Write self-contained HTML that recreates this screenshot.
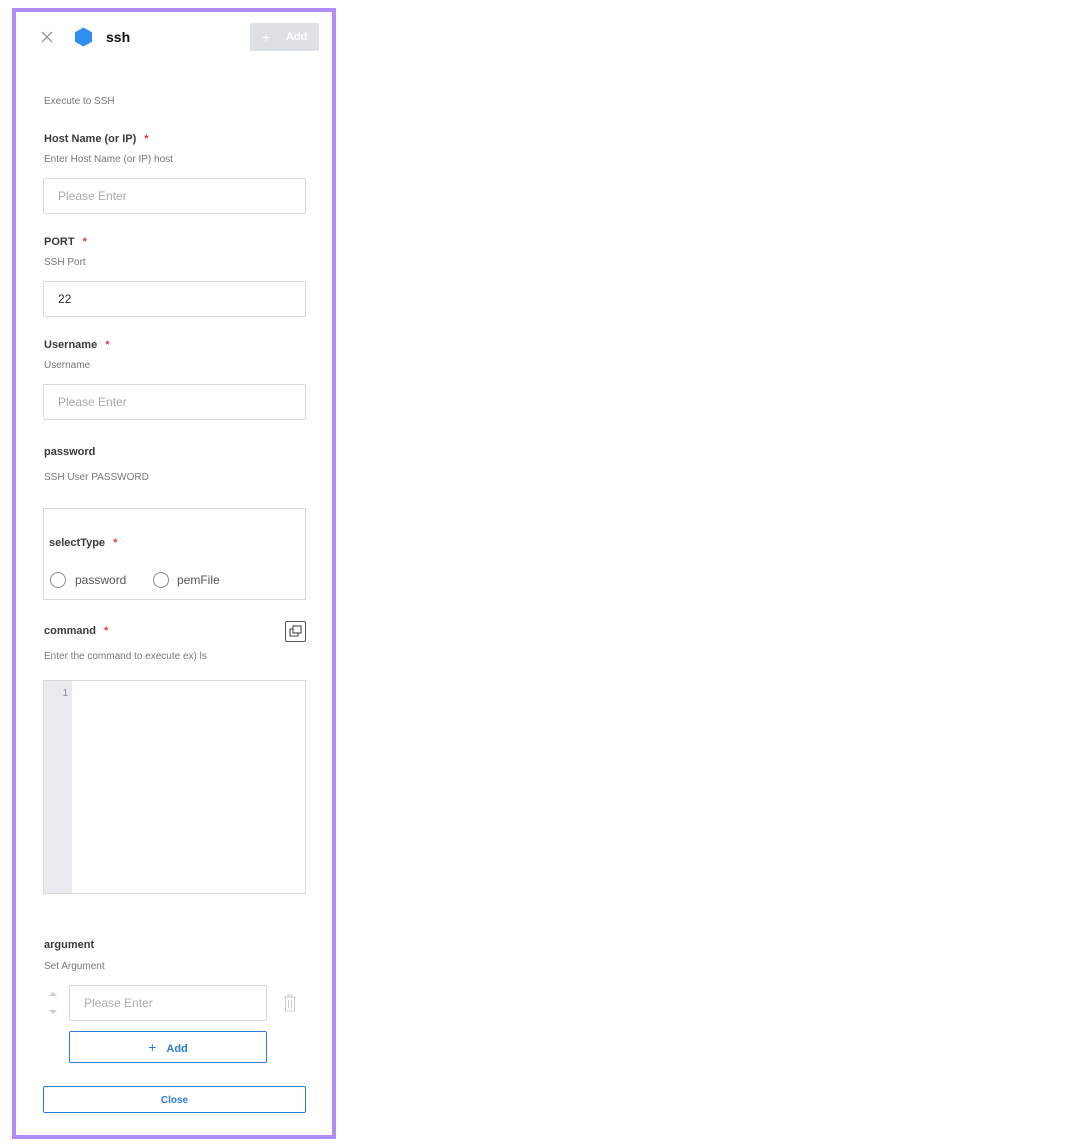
<!DOCTYPE html>
<html><head><meta charset="utf-8"><style>
*{box-sizing:border-box;margin:0;padding:0}
body{width:1078px;height:1146px;background:#fff;font-family:"Liberation Sans",Arial,sans-serif;position:relative;overflow:hidden}
.frame{position:absolute;left:12px;top:8px;width:324px;height:1131px;border:4px solid #b08cf7}
.a{position:absolute}
.lbl{font-size:11px;font-weight:bold;color:#3a3a3a}
.lbl .r{color:#e53935;margin-left:8px}
.d{font-size:10px;color:#777}
.inp{position:absolute;border:1px solid #d9d9d9;border-radius:2px;height:36px;font-size:12px;color:#aaa;padding-left:14px;line-height:34px}
</style></head><body>
<div class="frame"></div>
<svg class="a" style="left:41px;top:31px" width="12" height="12" viewBox="0 0 12 12"><path d="M1 1L11 11M11 1L1 11" stroke="#999" stroke-width="1.3"/></svg>
<svg class="a" style="left:74px;top:27px" width="19" height="20" viewBox="0 0 19 20"><path d="M9.5 0.5L18 5.2V14.8L9.5 19.5L1 14.8V5.2Z" fill="#2f8ff0"/></svg>
<div class="a" style="left:106px;top:29px;font-size:14px;font-weight:bold;color:#111">ssh</div>
<div class="a" style="left:250px;top:23px;width:69px;height:28px;background:#dde0e4;border-radius:2px;color:#fff;font-size:11px;font-weight:bold;line-height:28px"><span style="position:absolute;left:12px;font-weight:normal;font-size:14px">+</span><span style="position:absolute;left:36px">Add</span></div>
<div class="a d" style="left:44px;top:96px">Execute to SSH</div>
<div class="a lbl" style="left:44px;top:133px">Host Name (or IP)<span class="r">*</span></div>
<div class="a d" style="left:44px;top:154px">Enter Host Name (or IP) host</div>
<div class="inp" style="left:43px;top:178px;width:263px">Please Enter</div>
<div class="a lbl" style="left:44px;top:236px">PORT<span class="r">*</span></div>
<div class="a d" style="left:44px;top:257px">SSH Port</div>
<div class="inp" style="left:43px;top:281px;width:263px;color:#333">22</div>
<div class="a lbl" style="left:44px;top:339px">Username<span class="r">*</span></div>
<div class="a d" style="left:44px;top:360px">Username</div>
<div class="inp" style="left:43px;top:384px;width:263px">Please Enter</div>
<div class="a lbl" style="left:44px;top:446px">password</div>
<div class="a d" style="left:44px;top:472px">SSH User PASSWORD</div>
<div class="a" style="left:43px;top:508px;width:263px;height:92px;border:1px solid #d9d9d9"></div>
<div class="a lbl" style="left:49px;top:537px">selectType<span class="r">*</span></div>
<div class="a" style="left:50px;top:572px;width:16px;height:16px;border:1px solid #888;border-radius:50%"></div>
<div class="a" style="left:75px;top:573px;font-size:12px;color:#555">password</div>
<div class="a" style="left:153px;top:572px;width:16px;height:16px;border:1px solid #888;border-radius:50%"></div>
<div class="a" style="left:177px;top:573px;font-size:12px;color:#555">pemFile</div>
<div class="a lbl" style="left:44px;top:625px">command<span class="r">*</span></div>
<div class="a" style="left:285px;top:621px;width:21px;height:21px;border:1px solid #555;border-radius:2px"><svg width="19" height="19" viewBox="0 0 19 19" style="position:absolute;left:0;top:0"><rect x="7" y="4" width="8" height="7" fill="none" stroke="#444" stroke-width="1.1"/><path d="M7 7H4V14H12V11" fill="none" stroke="#444" stroke-width="1.1"/></svg></div>
<div class="a d" style="left:44px;top:651px">Enter the command to execute ex) ls</div>
<div class="a" style="left:43px;top:680px;width:263px;height:214px;border:1px solid #ddd"><div style="position:absolute;left:0;top:0;width:28px;height:212px;background:#e8eaed;font-size:10px;color:#888;text-align:right;padding:7px 4px 0 0">1</div></div>
<div class="a lbl" style="left:44px;top:939px">argument</div>
<div class="a d" style="left:44px;top:961px">Set Argument</div>
<div class="a" style="left:49px;top:992px;width:0;height:0;border:4px solid transparent;border-bottom:4px solid #ccc;border-top:0"></div>
<div class="a" style="left:49px;top:1010px;width:0;height:0;border:4px solid transparent;border-top:4px solid #ccc;border-bottom:0"></div>
<div class="inp" style="left:69px;top:985px;width:198px">Please Enter</div>
<svg class="a" style="left:283px;top:994px" width="14" height="18" viewBox="0 0 14 18"><path d="M1 3H13M5 3V1H9V3M2.5 3V17H11.5V3M5.5 6V14M8.5 6V14" fill="none" stroke="#ccc" stroke-width="1"/></svg>
<div class="a" style="left:69px;top:1031px;width:198px;height:32px;border:1px solid #2e7bd6;border-radius:2px;font-size:11px;font-weight:bold;color:#2e7bd6;text-align:center;line-height:30px"><span style="font-weight:normal;font-size:14px;margin-right:10px">+</span>Add</div>
<div class="a" style="left:43px;top:1086px;width:263px;height:27px;border:1px solid #2e7bd6;border-radius:2px;font-size:10px;font-weight:bold;color:#2e7bd6;text-align:center;line-height:27px">Close</div>
</body></html>
